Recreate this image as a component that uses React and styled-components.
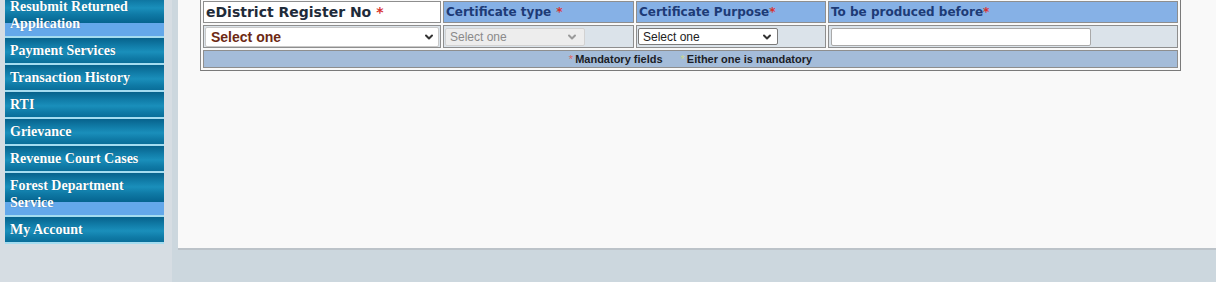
import React from "react";
import styled, { createGlobalStyle } from "styled-components";

const GlobalStyle = createGlobalStyle`
  html, body { margin: 0; padding: 0; }
  body {
    background: #ccd7de;
    font-family: "Liberation Sans", Arial, sans-serif;
    overflow: hidden;
  }
`;

const Page = styled.div`
  display: flex;
  align-items: flex-start;
  margin-top: -6px;
  min-height: 300px;
`;

const Sidebar = styled.nav`
  width: 159px;
  padding: 0 8px 0 5px;
  align-self: stretch;
  background: #d6dde3;
  display: flex;
  flex-direction: column;
`;

const NavItem = styled.a`
  display: block;
  padding: 4px 5px;
  line-height: 17px;
  font-family: "Liberation Serif", "Times New Roman", serif;
  font-weight: bold;
  font-size: 14px;
  color: #ffffff;
  text-decoration: none;
  text-shadow: 0 0 1px rgba(0, 40, 70, 0.5);
  background-color: #64a8ea;
  background-image: linear-gradient(
    to bottom,
    #07628c 0%,
    #127fab 30%,
    #1a8fbb 48%,
    #0f7aa6 70%,
    #05648f 100%
  );
  background-size: 100% 29px;
  background-repeat: repeat-x;
  border-bottom: 2px solid #a4dcf0;
`;

const Content = styled.main`
  flex: 1;
  margin-left: 6px;
  box-sizing: border-box;
  height: 256px;
  padding: 4px 0 0 22px;
  background: #f9f9f9;
  border-bottom: 2px solid #bcc3c9;
`;

const FormGrid = styled.div`
  display: grid;
  grid-template-columns: 238px 191px 190px 350px;
  grid-template-rows: 22px 23px 18px;
  gap: 2px;
  padding: 2px;
  width: max-content;
  border: 1px solid #8a8a8a;
  border-right-color: #7a7a7a;
  border-bottom-color: #7a7a7a;
`;

const HeadCell = styled.div`
  box-sizing: border-box;
  border: 1px solid #8e8e8e;
  display: flex;
  align-items: center;
  padding: 0 2px;
  font-family: "DejaVu Sans", Verdana, sans-serif;
  font-weight: bold;
  white-space: nowrap;
  background: ${(p) => (p.$plain ? "#ffffff" : "#86b1e6")};
  color: ${(p) => (p.$plain ? "#1f2b3a" : "#1d3b76")};
  font-size: ${(p) => (p.$plain ? "14px" : "12px")};
`;

const Req = styled.span`
  color: #d8322e;
  margin-left: ${(p) => (p.$spaced ? "5px" : "0")};
`;

const FieldCell = styled.div`
  box-sizing: border-box;
  border: 1px solid #8e8e8e;
  background: #dbe3ea;
  display: flex;
  align-items: center;
  padding: 0 1px;
`;

const SelectWrap = styled.div`
  position: relative;
  display: flex;
  width: ${(p) => p.$w}px;
  height: ${(p) => p.$h}px;
`;

const Select = styled.select`
  appearance: none;
  -webkit-appearance: none;
  box-sizing: border-box;
  width: 100%;
  height: 100%;
  margin: 0;
  padding: 0 18px 0 ${(p) => (p.$big ? "5px" : "4px")};
  border-radius: 2px;
  font-family: "Liberation Sans", Arial, sans-serif;
  font-size: ${(p) => (p.$big ? "14px" : "12px")};
  font-weight: ${(p) => (p.$big ? "bold" : "normal")};
  color: ${(p) => (p.disabled ? "#8a8a8a" : p.$big ? "#6d2914" : "#222222")};
  background: ${(p) => (p.disabled ? "#ededed" : "#ffffff")};
  border: 1px solid
    ${(p) => (p.disabled ? "#d2d2d2" : p.$big ? "#c9c9c9" : "#7a7a7a")};
  outline: none;
  opacity: 1;
`;

const Chevron = styled.svg`
  position: absolute;
  right: ${(p) => p.$r}px;
  top: 50%;
  transform: translateY(-50%);
  pointer-events: none;
`;

const TextInput = styled.input`
  box-sizing: border-box;
  width: 260px;
  height: 18px;
  margin: 0 0 0 1px;
  border: 1px solid #a9a9a9;
  border-radius: 2px;
  background: #ffffff;
  outline: none;
`;

const NoteCell = styled.div`
  grid-column: 1 / -1;
  box-sizing: border-box;
  border: 1px solid #8e8e8e;
  background: #a4bcd9;
  display: flex;
  align-items: center;
  justify-content: center;
  font-family: "Liberation Sans", Arial, sans-serif;
  font-size: 11px;
  font-weight: bold;
  color: #1b1d26;
  white-space: nowrap;
`;

const NoteMark = styled.span`
  color: ${(p) => p.$color};
  font-weight: normal;
  margin: ${(p) => p.$m};
`;

function Drop({ w, h, big, disabled, r = 6 }) {
  return (
    <SelectWrap $w={w} $h={h}>
      <Select $big={big} disabled={disabled} defaultValue="">
        <option value="">Select one</option>
      </Select>
      <Chevron
        $r={r}
        width="10"
        height="7"
        viewBox="0 0 10 7"
        fill="none"
        stroke={disabled ? "#9a9a9a" : "#333333"}
        strokeWidth="2"
        strokeLinecap="round"
        strokeLinejoin="round"
      >
        <path d="M2 2 L5 5 L8 2" />
      </Chevron>
    </SelectWrap>
  );
}

const navItems = [
  "Resubmit Returned Application",
  "Payment Services",
  "Transaction History",
  "RTI",
  "Grievance",
  "Revenue Court Cases",
  "Forest Department Service",
  "My Account",
];

export default function App() {
  return (
    <>
      <GlobalStyle />
      <Page>
        <Sidebar>
          {navItems.map((t) => (
            <NavItem key={t} href="#">
              {t}
            </NavItem>
          ))}
        </Sidebar>
        <Content>
          <FormGrid>
            <HeadCell $plain>
              eDistrict Register No<Req $spaced>*</Req>
            </HeadCell>
            <HeadCell>
              Certificate type<Req $spaced>*</Req>
            </HeadCell>
            <HeadCell>
              Certificate Purpose<Req>*</Req>
            </HeadCell>
            <HeadCell>
              To be produced before<Req>*</Req>
            </HeadCell>

            <FieldCell>
              <Drop w={234} h={20} big r={5} />
            </FieldCell>
            <FieldCell>
              <Drop w={140} h={18} disabled r={8} />
            </FieldCell>
            <FieldCell>
              <Drop w={140} h={17} r={6} />
            </FieldCell>
            <FieldCell>
              <TextInput type="text" />
            </FieldCell>

            <NoteCell>
              <NoteMark $color="#e06666" $m="0 2px 0 0">*</NoteMark>
              Mandatory fields
              <NoteMark $color="#cfd88e" $m="0 2px 0 18px">*</NoteMark>
              Either one is mandatory
            </NoteCell>
          </FormGrid>
        </Content>
      </Page>
    </>
  );
}
